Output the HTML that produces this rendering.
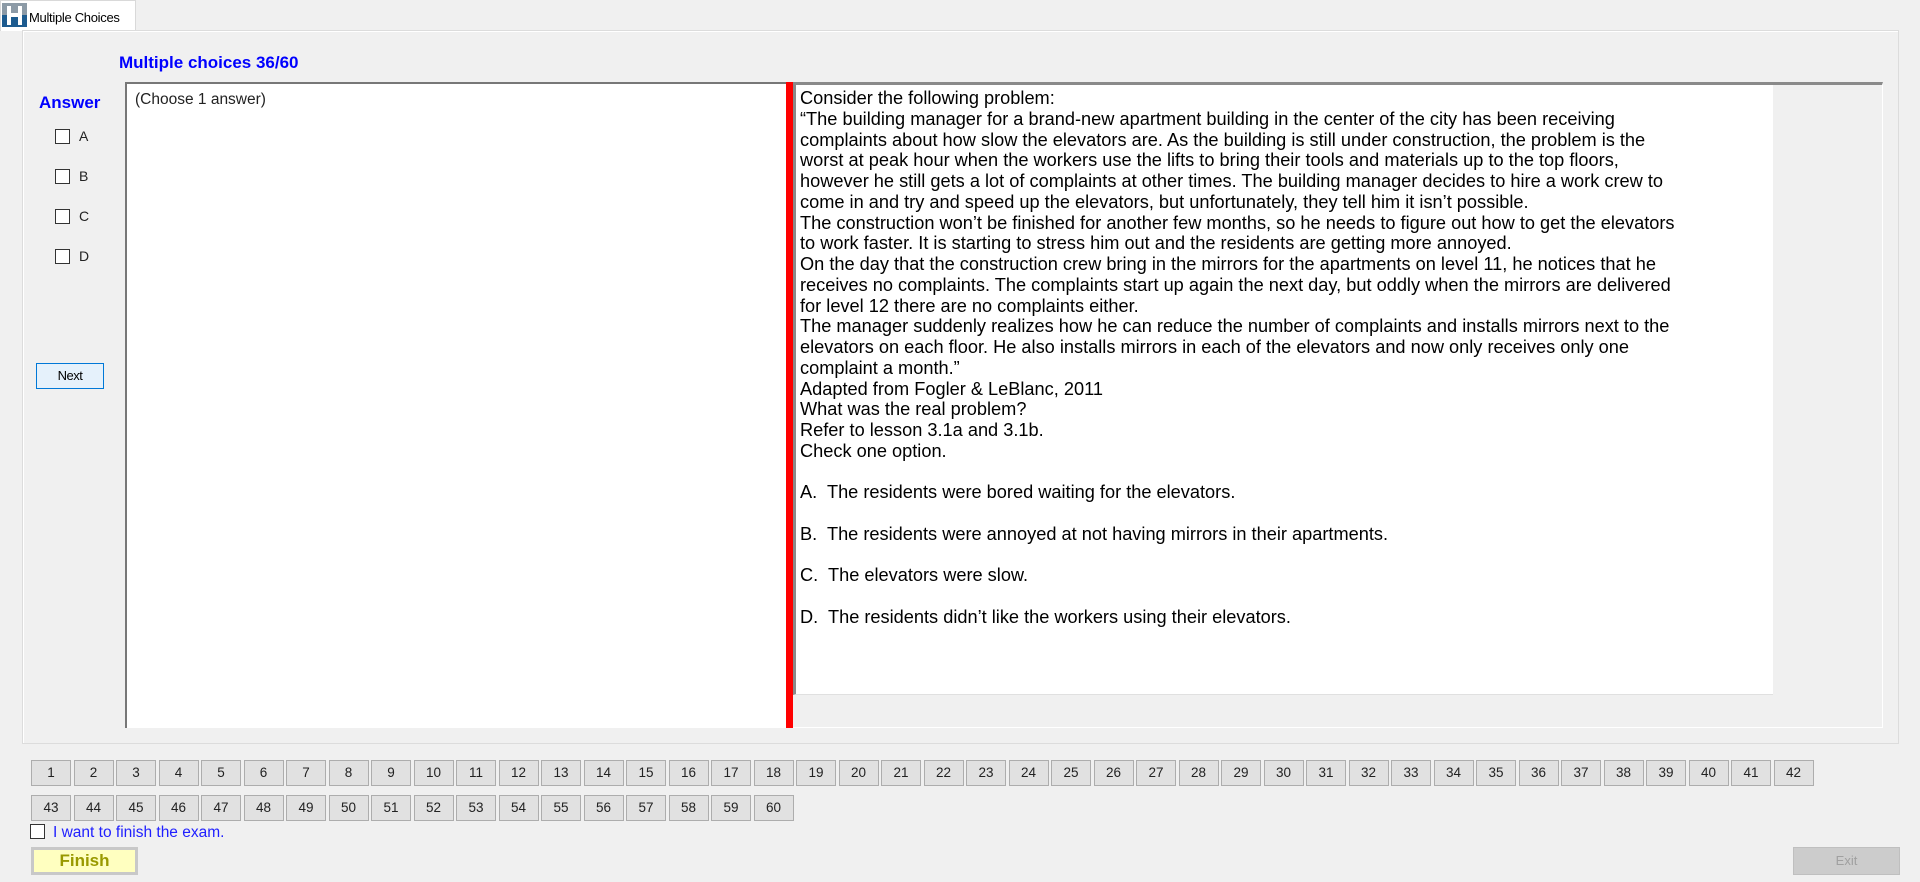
<!DOCTYPE html>
<html><head><meta charset="utf-8"><style>
*{margin:0;padding:0;box-sizing:border-box}
body{width:1920px;height:882px;background:#f0f0f0;font-family:"Liberation Sans",Arial,sans-serif;position:relative;overflow:hidden;color:#000}
.a{position:absolute}
.tab{left:0;top:0;width:136px;height:31px;background:#fff;border:1px solid #d9d9d9;border-bottom:none;font-size:13px;padding:9px 0 0 28px;letter-spacing:-0.3px}
.panel{left:22px;top:30px;width:1877px;height:714px;border:1px solid #dcdcdc;background:#f0f0f0;box-shadow:inset 1px 1px 0 #fff}
.title{left:119px;top:53px;color:#0000ff;font-weight:bold;font-size:17px}
.ans{left:39px;top:93px;color:#0000ff;font-weight:bold;font-size:17px}
.cb{width:15px;height:15px;border:1px solid #333;background:#fff}
.cl{font-size:14px;color:#222}
.lbox{left:125px;top:82px;width:662px;height:646px;background:#fff;border-left:2px solid #777;border-top:2px solid #777}
.red{left:786px;top:82px;width:7px;height:646px;background:#f00}
.rgrey{left:793px;top:82px;width:1090px;height:646px;background:#f0f0f0;border-top:3px solid #8a8a8a;border-right:1px solid #fff;border-bottom:1px solid #fff}
.rbox{left:793px;top:82px;width:980px;height:613px;background:#fff;border-top:3px solid #8a8a8a;border-left:3px solid #8a8a8a;border-bottom:1px solid #e0e0e0;padding:3px 0 0 4px;font-size:18.2px;line-height:20.75px;white-space:nowrap;overflow:hidden}
.next{left:36px;top:363px;width:68px;height:26px;background:#e5f1fb;border:1px solid #0078d7;font-size:13px;text-align:center;line-height:24px;letter-spacing:-0.5px}
.nb{width:40px;height:26px;background:#e1e1e1;border:1px solid #adadad;font-size:13.5px;text-align:center;line-height:24px;color:#222}
.fin{left:31px;top:847px;width:107px;height:28px;background:#ffffc0;border:3px solid #c8c8c8;color:#999900;font-weight:bold;font-size:17px;text-align:center;line-height:22px}
.exit{left:1793px;top:847px;width:107px;height:28px;background:#cccccc;border:1px solid #bfbfbf;color:#a0a0a0;font-size:13px;text-align:center;line-height:26px}
</style></head><body>
<div class="a tab">Multiple Choices</div>
<svg class="a" style="left:2px;top:3px" width="25" height="24" viewBox="0 0 25 24"><rect width="25" height="12" fill="#8c9aa6"/><rect y="12" width="25" height="12" fill="#1d5b8f"/><path d="M5 3h4v7h7V3h4v19h-4v-8H9v8H5z" fill="#fff"/></svg>
<div class="a panel"></div>
<div class="a title">Multiple choices 36/60</div>
<div class="a ans">Answer</div>
<div class="a cb" style="left:55px;top:129px"></div><div class="a cl" style="left:79px;top:128px">A</div>
<div class="a cb" style="left:55px;top:169px"></div><div class="a cl" style="left:79px;top:168px">B</div>
<div class="a cb" style="left:55px;top:209px"></div><div class="a cl" style="left:79px;top:208px">C</div>
<div class="a cb" style="left:55px;top:249px"></div><div class="a cl" style="left:79px;top:248px">D</div>
<div class="a next">Next</div>
<div class="a lbox"><div style="font-size:15.5px;padding:7px 0 0 8px;color:#222">(Choose 1 answer)</div></div>
<div class="a rgrey"></div>
<div class="a rbox">Consider the following problem:<br>“The building manager for a brand-new apartment building in the center of the city has been receiving<br>complaints about how slow the elevators are. As the building is still under construction, the problem is the<br>worst at peak hour when the workers use the lifts to bring their tools and materials up to the top floors,<br>however he still gets a lot of complaints at other times. The building manager decides to hire a work crew to<br>come in and try and speed up the elevators, but unfortunately, they tell him it isn’t possible.<br>The construction won’t be finished for another few months, so he needs to figure out how to get the elevators<br>to work faster. It is starting to stress him out and the residents are getting more annoyed.<br>On the day that the construction crew bring in the mirrors for the apartments on level 11, he notices that he<br>receives no complaints. The complaints start up again the next day, but oddly when the mirrors are delivered<br>for level 12 there are no complaints either.<br>The manager suddenly realizes how he can reduce the number of complaints and installs mirrors next to the<br>elevators on each floor. He also installs mirrors in each of the elevators and now only receives only one<br>complaint a month.”<br>Adapted from Fogler &amp; LeBlanc, 2011<br>What was the real problem?<br>Refer to lesson 3.1a and 3.1b.<br>Check one option.<br><br>A.&nbsp; The residents were bored waiting for the elevators.<br><br>B.&nbsp; The residents were annoyed at not having mirrors in their apartments.<br><br>C.&nbsp; The elevators were slow.<br><br>D.&nbsp; The residents didn’t like the workers using their elevators.</div>
<div class="a red"></div>
<div id="nums"></div>
<script>
var h='';for(var i=0;i<60;i++){var r=i<42?0:1,c=i<42?i:i-42;h+='<div class="a nb" style="left:'+(31+c*42.5)+'px;top:'+(760+r*35)+'px">'+(i+1)+'</div>';}
document.getElementById('nums').innerHTML=h;
</script>
<div class="a cb" style="left:30px;top:824px;border-color:#333"></div>
<div class="a" style="left:53px;top:824px;font-size:15.5px;color:#2020ff">I want to finish the exam.</div>
<div class="a fin">Finish</div>
<div class="a exit">Exit</div>
</body></html>
